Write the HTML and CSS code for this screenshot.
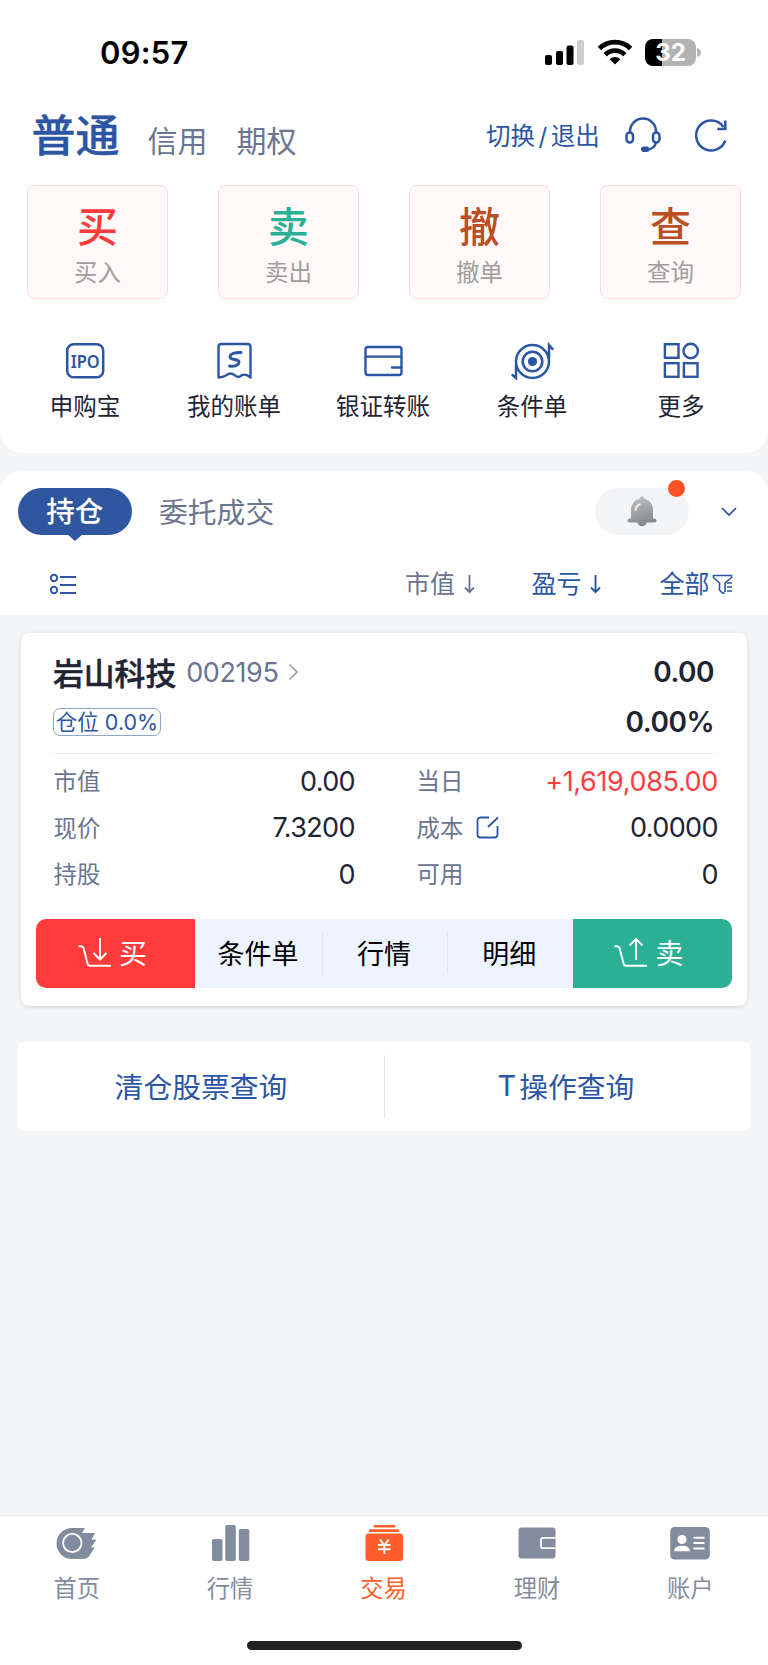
FILE: index.html
```html
<!DOCTYPE html>
<html lang="zh-CN">
<head>
<meta charset="utf-8">
<title>交易</title>
<link rel="stylesheet" href="styles.css">
</head>
<body>
<div class="screen">
  <section class="top">
    <div class="status">
      <span class="time">09:57</span>
      <div class="status-icons">
        <svg width="39" height="25" viewBox="0 0 39 25"><rect x="0" y="15" width="7" height="10" rx="2"/><rect x="11" y="11" width="7" height="14" rx="2"/><rect x="21.500" y="5.500" width="7" height="19.500" rx="2"/><rect x="32" y="0" width="7" height="25" rx="2" fill="#ccc"/></svg>
        <svg class="wifi" width="36" height="26" viewBox="0 0 36 26"><g fill="none" stroke="#000" stroke-width="4.800"><path d="M2.400 9.400a22.500 22.500 0 0 1 31.200 0"/><path d="M8.200 15.700a14 14 0 0 1 19.600 0"/></g><path d="M18 25.500l-5.300-5.300a7.800 7.800 0 0 1 10.600 0z"/></svg>
        <div class="battery"><span>32</span></div>
        <svg class="cap" width="4" height="9" viewBox="0 0 4 9"><path d="M0 0q4 1.500 4 4.500T0 9z" fill="#b3b3b3"/></svg>
      </div>
    </div>
    <header class="head">
      <span class="mode on">普通</span><span class="mode m2">信用</span><span class="mode m3">期权</span>
      <span class="switch">切换<i>/</i>退出</span>
      <svg class="headset" width="36" height="36" viewBox="0 0 36 36"><g fill="none" stroke="#2c56a3" stroke-width="2.500"><path d="M5 15V14.500a13 13 0 0 1 26 0V15"/><rect x="1.500" y="15.500" width="6.500" height="10" rx="3.250"/><rect x="28" y="15.500" width="6.500" height="10" rx="3.250"/><path d="M31 25.500c-1 4-4 6.500-8 7"/></g><rect x="16" y="29.500" width="8.500" height="5.500" rx="2.700" fill="#2c56a3"/></svg>
      <svg class="refresh" width="34" height="34" viewBox="0 0 34 34"><g fill="none" stroke="#2c56a3" stroke-width="2.500"><path d="M31.300 22.500A15 15 0 1 1 29.500 9"/><path d="M31.300 2.500v8.500h-8"/></g></svg>
    </header>
    <div class="acts">
      <div class="act"><b class="red">买</b><span>买入</span></div>
      <div class="act"><b class="green">卖</b><span>卖出</span></div>
      <div class="act"><b class="brown">撤</b><span>撤单</span></div>
      <div class="act"><b class="brown">查</b><span>查询</span></div>
    </div>
    <div class="tools">
      <div class="tool"><svg width="44" height="38" viewBox="0 0 44 38"><rect x="4.200" y="2.200" width="36" height="33" rx="6.500" fill="none" stroke="#2c56a3" stroke-width="2.500"/><text class="ipo" x="22.200" y="25.500" text-anchor="middle" textLength="29" lengthAdjust="spacingAndGlyphs">IPO</text></svg><span>申购宝</span></div>
      <div class="tool"><svg width="44" height="38" viewBox="0 0 44 38"><g fill="none" stroke="#2c56a3" stroke-width="2.400" stroke-linejoin="round" stroke-linecap="round"><path d="M6.500 35.500V4.800a2.800 2.800 0 0 1 2.800-2.800h26.400a2.800 2.800 0 0 1 2.800 2.800v30.700q-4.500-4.200-8.500-2.300-3.500 3.500-7.500 0-4-3.500-8 0-4 2-8 2.300z"/><path stroke-width="2.900" d="M29 10.500c-6.500 0-11 1.500-11 4.500 0 3.500 9 1.500 9 5 0 3.300-5 5-9.500 4"/></g></svg><span>我的账单</span></div>
      <div class="tool"><svg width="44" height="38" viewBox="0 0 44 38"><g fill="none" stroke="#2c56a3" stroke-width="2.400"><rect x="4.500" y="5" width="36" height="28" rx="2.500"/><path d="M5 14.600h35M31 25.500h9" stroke-linecap="round"/></g></svg><span>银证转账</span></div>
      <div class="tool"><svg width="44" height="38" viewBox="0 0 44 38"><g fill="none" stroke="#2c56a3" stroke-width="2.500"><circle cx="22.500" cy="19.500" r="16.500"/><circle cx="22.500" cy="19.500" r="9.800"/><path stroke-linecap="round" d="M39 16V3l3.500 4M6 23v13l-3.500-3"/></g><circle cx="22.500" cy="19.500" r="4.600" fill="#2c56a3"/></svg><span>条件单</span></div>
      <div class="tool"><svg width="44" height="38" viewBox="0 0 44 38"><g fill="none" stroke="#2c56a3" stroke-width="2.400"><rect x="5.900" y="2.200" width="13.600" height="13.600"/><circle cx="31.700" cy="9" r="7.200"/><rect x="5.900" y="21.200" width="13.600" height="13.600"/><rect x="24.900" y="21.200" width="13.600" height="13.600"/></g></svg><span>更多</span></div>
    </div>
  </section>

  <section class="tabs">
    <div class="tabrow">
      <div class="pill">持仓</div>
      <span class="tab">委托成交</span>
      <div class="bell">
        <svg width="30" height="31" viewBox="0 0 30 31"><defs><linearGradient id="g" x1="0" y1="0" x2="0.300" y2="1"><stop offset="0" stop-color="#c4c5c7"/><stop offset="1" stop-color="#87888b"/></linearGradient></defs><path fill="url(#g)" d="M15 .5c1.300 0 2 .9 2.200 2.200C22.500 4 26 8 26 14v8.500h1.500a2 2 0 0 1 0 4H19.500a4.600 4.600 0 0 1-9 0H2.500a2 2 0 0 1 0-4H4V14C4 8 7.500 4 12.800 2.700 13 1.400 13.700.5 15 .5z"/><path d="M8.500 14q.8-4.500 4.500-6" stroke="#f3f3ee" stroke-width="1.800" fill="none" stroke-linecap="round"/></svg>
        <i class="dot"></i>
      </div>
      <svg class="down" width="16" height="10" viewBox="0 0 16 10"><path d="M1 1l7 7 7-7" fill="none" stroke="#2c56a3" stroke-width="1.700"/></svg>
    </div>
    <div class="sortrow">
      <svg class="list" width="28" height="22" viewBox="0 0 28 22"><g fill="none" stroke="#2c56a3" stroke-width="1.900"><circle cx="5" cy="5" r="3.200"/><circle cx="5" cy="17" r="3.200"/><path d="M11 4h16M11 12h16M11 20h16"/></g></svg>
      <div class="sort grey s1"><span>市值</span><svg width="11" height="20" viewBox="0 0 11 20"><path d="M5.500 1v17M1 13.500l4.500 4.700 4.500-4.700" fill="none" stroke="#6a7590" stroke-width="1.900"/></svg></div>
      <div class="sort s2"><span>盈亏</span><svg width="11" height="20" viewBox="0 0 11 20"><path d="M5.500 1v17M1 13.500l4.500 4.700 4.500-4.700" fill="none" stroke="#2c56a3" stroke-width="1.900"/></svg></div>
      <div class="sort s3"><span>全部</span><svg width="21" height="21" viewBox="0 0 21 21"><g fill="none" stroke="#2c56a3" stroke-width="1.600" stroke-linejoin="round"><path d="M12.500 18.500q-1.500 1.500-3-.5l-2-2V9L1.500 3.500V1.500h18v2L13 9v9"/><path d="M15 9h5M15 13h5M15 17h5"/></g></svg></div>
    </div>
  </section>

  <section class="card">
    <div class="r1"><b class="name">岩山科技</b><span class="code">002195</span><svg width="11" height="18" viewBox="0 0 11 18"><path d="M1.500 1.500L9 9l-7.500 7.500" fill="none" stroke="#9aa2b5" stroke-width="1.700"/></svg><b class="big">0.00</b></div>
    <div class="r2"><span class="tag">仓位 <em>0.0%</em></span><b class="big">0.00%</b></div>
    <div class="grid">
      <div class="kv"><span>市值</span><em>0.00</em></div><div class="kv"><span>当日</span><em class="up">+1,619,085.00</em></div>
      <div class="kv"><span>现价</span><em>7.3200</em></div><div class="kv"><span>成本</span><svg class="edit" width="23" height="23" viewBox="0 0 23 23"><path d="M13 1.500H4.500a3 3 0 0 0-3 3v14a3 3 0 0 0 3 3h14a3 3 0 0 0 3-3V10M12 11L22 1.500" fill="none" stroke="#2c56a3" stroke-width="1.800"/></svg><em>0.0000</em></div>
      <div class="kv"><span>持股</span><em>0</em></div><div class="kv"><span>可用</span><em>0</em></div>
    </div>
    <div class="btns">
      <div class="buy"><svg width="34" height="30" viewBox="0 0 34 30"><path d="M0.500 8.200H3q2 0 2.600 2l4 15.500q.5 2 2.500 2H33M22 0v21.500M15.500 15l6.500 6.500 6.500-6.500" fill="none" stroke="#fff" stroke-width="2"/></svg><span>买</span></div>
      <div class="mid w1">条件单</div><div class="mid w2">行情</div><div class="mid w3">明细</div>
      <div class="sell"><svg width="34" height="30" viewBox="0 0 34 30"><path d="M0.500 8.200H3q2 0 2.600 2l4 15.500q.5 2 2.500 2H33M22 22V1M15.500 7.500L22 1l6.500 6.500" fill="none" stroke="#fff" stroke-width="2"/></svg><span>卖</span></div>
    </div>
  </section>

  <section class="query"><div>清仓股票查询</div><div><i>T</i>操作查询</div></section>

  <nav class="nav">
    <div class="items">
      <div class="item"><svg width="42" height="38" viewBox="0 0 42 38"><path fill="#838b9f" d="M16 4h13l-3 5H39l-3.500 6.500 5 .3-5.500 7.400 3.500.5q-3.500 5.500-5 8Q31 35 27 35H16A15.500 15.500 0 0 1 16 4z"/><circle cx="16.300" cy="19" r="9.200" fill="none" stroke="#fff" stroke-width="1.800"/></svg><span>首页</span></div>
      <div class="item"><svg width="42" height="38" viewBox="0 0 42 38"><g fill="#838b9f"><rect x="3" y="15" width="10.500" height="22" rx="1.800"/><rect x="16.300" y="1" width="10.500" height="36" rx="1.800"/><rect x="29.800" y="5" width="10.500" height="32" rx="1.800"/></g></svg><span>行情</span></div>
      <div class="item on"><svg width="42" height="38" viewBox="0 0 42 38"><g fill="#ff5e2b"><rect x="10.500" y="1" width="22" height="2.600" rx="1"/><rect x="6" y="5.300" width="30" height="2.800" rx="1"/><rect x="2.500" y="9.600" width="37.500" height="27.500" rx="3"/></g><path d="M17 15.500l4.300 6 4.300-6M15 21h12.500M15 25.300h12.500M21.300 21.500v8.500" fill="none" stroke="#fff" stroke-width="1.900"/></svg><span>交易</span></div>
      <div class="item"><svg width="42" height="38" viewBox="0 0 42 38"><rect x="2.500" y="3.500" width="37" height="31" rx="3" fill="#838b9f"/><path d="M39.500 13.800H27a2 2 0 0 0-2 2v6.400a2 2 0 0 0 2 2h12.500" fill="none" stroke="#fff" stroke-width="1.800"/></svg><span>理财</span></div>
      <div class="item"><svg width="42" height="38" viewBox="0 0 42 38"><rect x="1.200" y="3" width="39.600" height="32.500" rx="4.500" fill="#838b9f"/><circle cx="13" cy="15.500" r="4.600" fill="#fff"/><path d="M5 27.300q0-5.600 8-5.600t8 5.600z" fill="#fff"/><path d="M24.500 13.800h11M24.500 19h11M24.500 24.500h11" stroke="#fff" stroke-width="1.900"/></svg><span>账户</span></div>
    </div>
    <div class="home"></div>
  </nav>
</div>
</body>
</html>
```
FILE: styles.css
```css
* { box-sizing: border-box; }
body { margin: 0; background: #f3f5f7; font-family: Inter, "Noto Sans CJK SC", sans-serif; color: #1f2433; }
em, i { font-style: normal; }
svg { display: block; flex: none; }
.screen { width: 768px; height: 1665px; display: flex; flex-direction: column; overflow: hidden; }

.top { height: 453px; flex: none; background: #fff; border-radius: 0 0 22px 22px; }
.status { height: 104px; display: flex; align-items: center; padding-left: 100px; }
.time { font-size: 31px; font-weight: 600; color: #000; width: 445px; letter-spacing: .2px; }
.status-icons { display: flex; align-items: center; }
.wifi { margin-left: 13px; }
.battery { margin-left: 12px; width: 51px; height: 27px; border-radius: 8px; background: linear-gradient(90deg, #000 17px, #b3b3b3 17px); color: #fff; font-weight: 700; font-size: 24px; line-height: 27px; text-align: center; }
.cap { margin-left: 1px; }

.head { height: 81px; display: flex; align-items: flex-start; color: #2c56a3; padding-left: 31.500px; white-space: nowrap; }
.mode { font-size: 30px; line-height: 40px; color: #6a7590; margin-top: 17px; }
.mode.on { width: 116px; font-size: 44px; line-height: 60px; margin-top: 2px; font-weight: 500; color: #2c56a3; -webkit-text-stroke: .4px #2c56a3; }
.m2 { width: 89px; }
.m3 { width: 249.500px; }
.switch { font-size: 24.500px; line-height: 36px; margin-top: 14px; width: 139px; }
.switch i { margin: 0 3.500px; }
.headset { margin-top: 13px; }
.refresh { margin: 14px 0 0 33px; }

.acts { display: flex; gap: 50px; padding: 0 27px; }
.act { width: 141px; height: 114px; border: 1.500px solid #ffdcdc; border-radius: 7px; background: #fff9f9; display: flex; flex-direction: column; align-items: center; }
.act b { font-size: 41px; line-height: 56px; margin-top: 13px; font-weight: 500; }
.act span { font-size: 23.500px; line-height: 30px; margin-top: 3px; color: #a09d9d; }
.red { color: #ff3a3a; }
.green { color: #2bb095; }
.brown { color: #b94f22; }

.tools { display: flex; padding: 43px 11px 0 10.500px; }
.tool { width: 149px; display: flex; flex-direction: column; align-items: center; font-size: 23.500px; line-height: 32px; }
.tool span { margin-top: 11px; }
.ipo { font-size: 18.500px; font-weight: 600; fill: #2c56a3; font-family: "Noto Sans", sans-serif; }

.tabs { margin-top: 18px; height: 144px; flex: none; background: #fff; border-radius: 22px 22px 0 0; padding-top: 17px; }
.tabrow { height: 47px; display: flex; align-items: center; padding-left: 17.500px; }
.pill { position: relative; width: 114.500px; height: 47px; border-radius: 24px; background: #2f57a0; color: #fff; font-size: 28.500px; font-weight: 500; line-height: 48px; text-align: center; }
.pill::after { content: ""; position: absolute; left: 49px; bottom: -6px; border: 8px solid transparent; border-top: 7px solid #2f57a0; border-bottom: 0; }
.tab { margin-left: 27px; width: 436px; font-size: 28.800px; color: #6a7590; padding-bottom: 3px; }
.bell { position: relative; width: 94px; height: 47px; border-radius: 24px; background: #f3f4f6; display: flex; align-items: center; justify-content: center; }
.dot { position: absolute; right: 4px; top: -8px; width: 17px; height: 17px; border-radius: 50%; background: #ff5026; }
.down { margin-left: 31.500px; }
.sortrow { display: flex; align-items: center; height: 40px; margin-top: 29px; padding-left: 49px; }
.sort { display: flex; align-items: center; font-size: 25px; color: #2c56a3; line-height: 36px; }
.grey { color: #6a7590; }
.s1 { margin-left: 328px; width: 126.500px; gap: 8.500px; }
.s2 { width: 128px; gap: 8.500px; }
.s3 { gap: 2.500px; }

.card { margin: 18px 21px 0; height: 373px; flex: none; background: #fff; border-radius: 8px; box-shadow: 0 1px 4px rgba(0,0,0,.13); padding: 14px 15px 0; }
.r1, .r2 { display: flex; align-items: center; height: 50px; padding: 0 18px 0 17px; }
.name { font-size: 30.800px; font-weight: 500; -webkit-text-stroke: .5px #1f2433; padding-bottom: 2px; }
.code { font-size: 27px; letter-spacing: -.4px; color: #6a7590; margin: 0 10px 0 10px; }
.big { margin-left: auto; font-size: 28px; font-weight: 600; letter-spacing: -.5px; }
.tag { height: 28px; width: 108px; border: 1.500px solid #8da4cf; border-radius: 7px; color: #2c56a3; font-size: 21.500px; line-height: 26px; text-align: center; white-space: nowrap; }
.grid { margin: 6px 17px 0; border-top: 1px solid #e8eaed; padding-top: 4px; display: grid; grid-template-columns: 302px 1fr; column-gap: 61px; }
.grid .kv:nth-child(even) { margin-right: -3px; }
.kv { height: 46.500px; display: flex; align-items: center; font-size: 23.400px; color: #6a7590; }
.kv span { margin-left: .5px; padding-bottom: 2px; }
.kv em { margin-left: auto; font-size: 27px; color: #1f2433; letter-spacing: -.6px; }
.kv em.up { color: #ff3f3f; letter-spacing: -.35px; }
.edit { margin-left: 12.500px; }
.btns { display: flex; height: 69px; margin-top: 21px; border-radius: 10px; overflow: hidden; background: #edf4ff; color: #000; font-size: 27px; }
.buy, .sell { width: 159px; display: flex; align-items: center; justify-content: center; gap: 7px; color: #fff; font-size: 28px; }
.buy { padding-right: 6px; background: #ff3b3c; }
.sell { margin-left: auto; padding-right: 7px; background: #2bb095; }
.buy span, .sell span { padding-bottom: 2px; }
.mid { display: flex; align-items: center; justify-content: center; height: 41px; align-self: center; padding-bottom: 2px; }
.w1 { width: 128px; border-right: 1px solid #dfe5f0; padding-right: 1px; }
.w2 { width: 125px; border-right: 1px solid #dfe5f0; padding-right: 2px; }
.w3 { width: 123.500px; padding-right: 1px; }

.query { margin: 36px 18px 0; height: 89px; flex: none; display: grid; grid-template-columns: 366px 366px; align-items: center; background: #fff; border-radius: 6px; color: #2c56a3; font-size: 28.800px; }
.query div { height: 63px; display: flex; align-items: center; justify-content: center; padding-bottom: 2px; }
.query div + div { border-left: 1px solid #e6e8ec; padding-right: 3px; }
.query i { margin-right: 3px; }

.nav { margin-top: auto; height: 150px; flex: none; background: #fff; border-top: 1px solid #e9eaec; display: flex; flex-direction: column; align-items: center; }
.items { width: 768px; display: flex; height: 125px; padding: 8px 1px 0 0; }
.item { flex: 1; display: flex; flex-direction: column; align-items: center; color: #838b9f; font-size: 23.300px; line-height: 32px; }
.item span { margin-top: 11px; }
.item.on { color: #ff5e2b; }
.home { width: 275px; height: 9px; border-radius: 5px; background: #222; }
```
